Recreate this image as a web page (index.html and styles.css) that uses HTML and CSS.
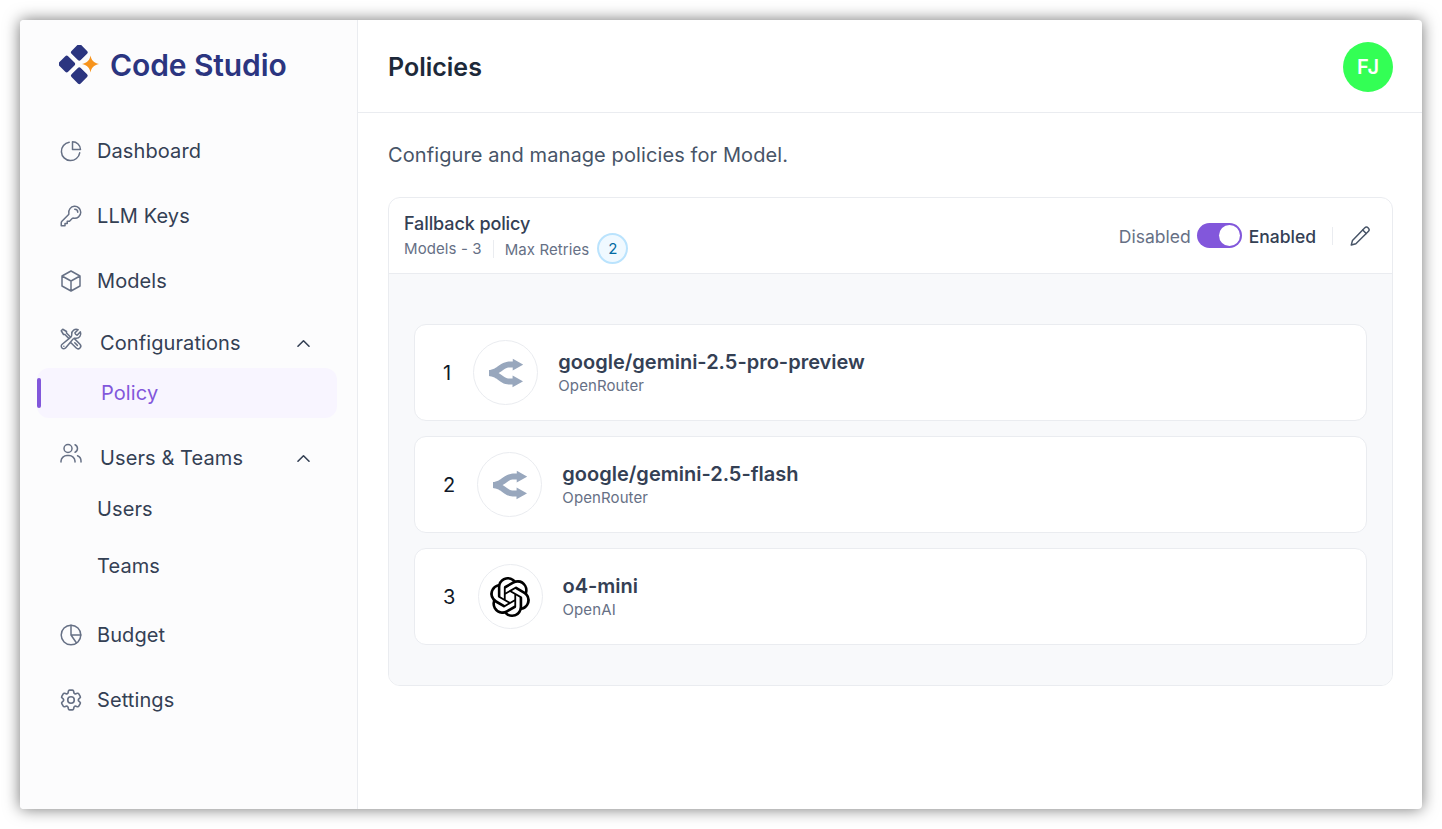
FILE: index.html
```html
<!DOCTYPE html>
<html lang="en">
<head>
<meta charset="utf-8">
<title>Policies</title>
<link rel="stylesheet" href="styles.css">
</head>
<body>
<div class="window">
  <aside class="sidebar">
    <div class="logo">
      <svg class="logo-mark" viewBox="0 0 40 40" width="40" height="40">
        <rect x="13.8" y="0.8" width="13" height="13" rx="2" transform="rotate(45 20.300 7.300)" fill="#2b3580"/>
        <rect x="1.200" y="12.500" width="13" height="13" rx="2" transform="rotate(45 7.700 19)" fill="#2b3580"/>
        <rect x="13.8" y="24.200" width="13" height="13" rx="2" transform="rotate(45 20.300 30.700)" fill="#2b3580"/>
        <path d="M31.500 10.500c1 5 3 7 8.500 8.500-5.500 1.500-7.500 3.500-8.500 8.500-1-5-3-7-8.500-8.500 5.500-1.500 7.500-3.500 8.500-8.500Z" fill="#f7941d"/>
      </svg>
      <span class="logo-text">Code Studio</span>
    </div>
    <nav class="nav">
      <a class="nav-item"><svg class="icon" viewBox="0 0 24 24"><path d="M10.200 3.300A9.200 9.200 0 1 0 20.700 13.800"/><path d="M13.500 2.800v7.700h8A8 8 0 0 0 13.500 2.800Z"/></svg>Dashboard</a>
      <a class="nav-item"><svg class="icon" viewBox="0 0 24 24"><path d="M15.750 5.250a3 3 0 0 1 3 3m3 0a6 6 0 0 1-7.029 5.912c-.563-.097-1.159.026-1.563.43L10.500 17.250H8.250v2.250H6v2.250H2.250v-2.818c0-.597.237-1.170.659-1.591l6.499-6.499c.404-.404.527-1 .43-1.563A6 6 0 1 1 21.750 8.250Z"/></svg>LLM Keys</a>
      <a class="nav-item"><svg class="icon" viewBox="0 0 24 24"><path d="m21 7-9-5L3 7m18 0-9 5m9-5v10l-9 5M3 7l9 5M3 7v10l9 5m0-10v10"/></svg>Models</a>

      <div class="group group-config">
        <div class="group-head">
          <svg class="icon icon-raised" viewBox="0 0 24 24"><path d="M11.420 15.170 17.250 21A2.652 2.652 0 0 0 21 17.250l-5.877-5.877M11.420 15.170l2.496-3.030c.317-.384.74-.626 1.208-.766M11.420 15.170l-4.655 5.653a2.548 2.548 0 1 1-3.586-3.586l6.837-5.630m5.108-.233c.55-.164 1.163-.188 1.743-.14a4.500 4.500 0 0 0 4.486-6.336l-3.276 3.277a3.004 3.004 0 0 1-2.250-2.250l3.276-3.276a4.500 4.500 0 0 0-6.336 4.486c.091 1.076-.071 2.264-.904 2.950l-.102.085m-1.745 1.437L5.909 7.500H4.500L2.250 3.750l1.500-1.500L7.500 4.500v1.409l4.260 4.260m-1.745 1.437 1.745-1.437m6.615 8.206L15.750 15.750M4.867 19.125h.008v.008h-.008v-.008Z"/></svg>
          <span class="group-label">Configurations</span>
          <svg class="chevron" viewBox="0 0 24 24"><path d="m5 15.500 7-7 7 7"/></svg>
        </div>
        <a class="sub-item active">Policy</a>
      </div>

      <div class="group group-users">
        <div class="group-head">
          <svg class="icon icon-raised" viewBox="0 0 24 24"><circle cx="9" cy="6.500" r="4"/><path d="M2 20v-1a6 6 0 0 1 6-5.500h2a6 6 0 0 1 6 5.500v1"/><path d="M16 2.800a4 4 0 0 1 0 7.400"/><path d="M18.500 13.800a5.500 5.500 0 0 1 3.500 5.200v1"/></svg>
          <span class="group-label">Users &amp; Teams</span>
          <svg class="chevron" viewBox="0 0 24 24"><path d="m5 15.500 7-7 7 7"/></svg>
        </div>
        <a class="sub-item plain">Users</a>
        <a class="sub-item plain">Teams</a>
      </div>

      <a class="nav-item nav-after"><svg class="icon" viewBox="0 0 24 24"><circle cx="12" cy="12" r="9.800"/><path d="M12 2.200V12h9.800M12 12l5.500 8"/></svg>Budget</a>
      <a class="nav-item"><svg class="icon" viewBox="1 1 22 22"><path d="M9.594 3.940c.09-.542.56-.94 1.110-.94h2.593c.55 0 1.020.398 1.110.94l.213 1.281c.063.374.313.686.645.87.074.04.147.083.22.127.325.196.72.257 1.075.124l1.217-.456a1.125 1.125 0 0 1 1.370.49l1.296 2.247a1.125 1.125 0 0 1-.26 1.431l-1.003.827c-.293.241-.438.613-.43.992a7.723 7.723 0 0 1 0 .255c-.008.378.137.75.43.991l1.004.827c.424.35.534.955.26 1.430l-1.298 2.247a1.125 1.125 0 0 1-1.369.491l-1.217-.456c-.355-.133-.75-.072-1.076.124a6.470 6.470 0 0 1-.22.128c-.331.183-.581.495-.644.869l-.213 1.281c-.09.543-.56.94-1.110.94h-2.594c-.55 0-1.019-.398-1.110-.94l-.213-1.281c-.062-.374-.312-.686-.644-.87a6.520 6.520 0 0 1-.22-.127c-.325-.196-.72-.257-1.076-.124l-1.217.456a1.125 1.125 0 0 1-1.369-.49l-1.297-2.247a1.125 1.125 0 0 1 .26-1.431l1.004-.827c.292-.24.437-.613.43-.991a6.932 6.932 0 0 1 0-.255c.007-.38-.138-.751-.43-.992l-1.004-.827a1.125 1.125 0 0 1-.26-1.430l1.297-2.247a1.125 1.125 0 0 1 1.370-.491l1.216.456c.356.133.751.072 1.076-.124.072-.044.146-.086.22-.128.332-.183.582-.495.644-.869l.214-1.280Z"/><path d="M15 12a3 3 0 1 1-6 0 3 3 0 0 1 6 0Z"/></svg>Settings</a>
    </nav>
  </aside>

  <main class="main">
    <header class="topbar">
      <h1 class="page-title">Policies</h1>
      <div class="avatar">FJ</div>
    </header>
    <section class="content">
      <p class="intro">Configure and manage policies for Model.</p>
      <div class="card">
        <div class="card-head">
          <div class="card-info">
            <div class="card-title">Fallback policy</div>
            <div class="card-meta">
              <span class="meta-models">Models - 3</span>
              <span class="meta-retries">Max Retries</span>
              <span class="badge">2</span>
            </div>
          </div>
          <div class="card-actions">
            <span class="state-off">Disabled</span>
            <span class="toggle"><span class="knob"></span></span>
            <span class="state-on">Enabled</span>
            <span class="edit">
              <svg viewBox="0 0 24 24" width="22" height="22" class="pencil"><path d="M17 3.200a2.800 2.800 0 0 1 4 4L7.500 20.500 2.500 21.800l1.300-5Z"/><path d="m15 5.500 3.800 3.800"/></svg>
            </span>
          </div>
        </div>
        <div class="card-body">
          <div class="model-row">
            <span class="rank">1</span>
            <span class="model-logo"><svg class="or-logo" viewBox="0 0 24 24"><path d="M16.804 1.957l7.220 4.105v.087L16.730 10.210l.017-2.117-.821-.03c-1.059-.028-1.611.002-2.268.11-1.064.175-2.038.577-3.147 1.352L8.345 11.030c-.284.195-.495.336-.68.455l-.515.322-.397.234.385.23.53.338c.476.314 1.170.796 2.701 1.866 1.110.775 2.083 1.177 3.147 1.352l.3.045c.694.091 1.375.094 2.825.033l.022-2.159 7.220 4.105v.087L16.589 22l.014-1.862-.635.022c-1.386.042-2.137.002-3.138-.162-1.694-.28-3.260-.926-4.881-2.059l-2.158-1.500a21.997 21.997 0 00-.755-.498l-.467-.28a55.927 55.927 0 00-.76-.43C2.908 14.730.563 14.116 0 14.116V9.888l.14.004c.564-.007 2.910-.622 3.809-1.124l1.016-.58.438-.274c.428-.28 1.072-.726 2.686-1.853 1.621-1.133 3.186-1.780 4.881-2.059 1.152-.19 1.974-.213 3.814-.138l.02-1.907z"/></svg></span>
            <div class="model-text"><div class="model-name">google/gemini-2.5-pro-preview</div><div class="model-vendor">OpenRouter</div></div>
          </div>
          <div class="model-row">
            <span class="rank">2</span>
            <span class="model-logo"><svg class="or-logo" viewBox="0 0 24 24"><path d="M16.804 1.957l7.220 4.105v.087L16.730 10.210l.017-2.117-.821-.03c-1.059-.028-1.611.002-2.268.11-1.064.175-2.038.577-3.147 1.352L8.345 11.030c-.284.195-.495.336-.68.455l-.515.322-.397.234.385.23.53.338c.476.314 1.170.796 2.701 1.866 1.110.775 2.083 1.177 3.147 1.352l.3.045c.694.091 1.375.094 2.825.033l.022-2.159 7.220 4.105v.087L16.589 22l.014-1.862-.635.022c-1.386.042-2.137.002-3.138-.162-1.694-.28-3.260-.926-4.881-2.059l-2.158-1.500a21.997 21.997 0 00-.755-.498l-.467-.28a55.927 55.927 0 00-.76-.43C2.908 14.730.563 14.116 0 14.116V9.888l.14.004c.564-.007 2.910-.622 3.809-1.124l1.016-.58.438-.274c.428-.28 1.072-.726 2.686-1.853 1.621-1.133 3.186-1.780 4.881-2.059 1.152-.19 1.974-.213 3.814-.138l.02-1.907z"/></svg></span>
            <div class="model-text"><div class="model-name">google/gemini-2.5-flash</div><div class="model-vendor">OpenRouter</div></div>
          </div>
          <div class="model-row">
            <span class="rank">3</span>
            <span class="model-logo"><svg class="ai-logo" viewBox="0 0 24 24"><path d="M22.2819 9.8211a5.9847 5.9847 0 0 0-.5157-4.9108 6.0462 6.0462 0 0 0-6.5098-2.9A6.0651 6.0651 0 0 0 4.9807 4.1818a5.9847 5.9847 0 0 0-3.9977 2.9 6.0462 6.0462 0 0 0 .7427 7.0966 5.98 5.98 0 0 0 .511 4.9107 6.051 6.051 0 0 0 6.5146 2.9001A5.9847 5.9847 0 0 0 13.2599 24a6.0557 6.0557 0 0 0 5.7718-4.2058 5.9894 5.9894 0 0 0 3.9977-2.9001 6.0557 6.0557 0 0 0-.7475-7.0729zm-9.022 12.6081a4.4755 4.4755 0 0 1-2.8764-1.0408l.1419-.0804 4.7783-2.7582a.7948.7948 0 0 0 .3927-.6813v-6.7369l2.02 1.1686a.071.071 0 0 1 .038.052v5.5826a4.504 4.504 0 0 1-4.4945 4.4944zm-9.6607-4.1254a4.4708 4.4708 0 0 1-.5346-3.0137l.142.0852 4.783 2.7582a.7712.7712 0 0 0 .7806 0l5.8428-3.3685v2.3324a.0804.0804 0 0 1-.0332.0615L9.74 19.9502a4.4992 4.4992 0 0 1-6.1408-1.6464zM2.3408 7.8956a4.485 4.485 0 0 1 2.3655-1.9728V11.6a.7664.7664 0 0 0 .3879.6765l5.8144 3.3543-2.0201 1.1685a.0757.0757 0 0 1-.071 0l-4.8303-2.7865A4.504 4.504 0 0 1 2.3408 7.872zm16.5963 3.8558L13.1038 8.364 15.1192 7.2a.0757.0757 0 0 1 .071 0l4.8303 2.7913a4.4944 4.4944 0 0 1-.6765 8.1042v-5.6772a.79.79 0 0 0-.407-.667zm2.0107-3.0231l-.142-.0852-4.7735-2.7818a.7759.7759 0 0 0-.7854 0L9.409 9.2297V6.8974a.0662.0662 0 0 1 .0284-.0615l4.8303-2.7866a4.4992 4.4992 0 0 1 6.6802 4.66zM8.3065 12.863l-2.02-1.1638a.0804.0804 0 0 1-.038-.0567V6.0742a4.4992 4.4992 0 0 1 7.3757-3.4537l-.142.0805L8.704 5.459a.7948.7948 0 0 0-.3927.6813zm1.0976-2.3654l2.602-1.4998 2.6069 1.4998v2.9994l-2.5974 1.4997-2.6067-1.4997Z"/></svg></span>
            <div class="model-text"><div class="model-name">o4-mini</div><div class="model-vendor">OpenAI</div></div>
          </div>
        </div>
      </div>
    </section>
  </main>
</div>
</body>
</html>
```
FILE: styles.css
```css
* { box-sizing: border-box; }
html, body { margin: 0; padding: 0; background: #fff; }
body {
  width: 1442px;
  height: 829px;
  padding: 20px;
  overflow: hidden;
  font-family: Inter, "Liberation Sans", sans-serif;
  color: #344054;
}
.window {
  display: flex;
  width: 1402px;
  height: 789px;
  background: #fff;
  border-radius: 4px;
  box-shadow: 0 0 16px rgba(0, 0, 0, .55);
  overflow: hidden;
}
.sidebar {
  width: 338px;
  flex: none;
  background: #fcfcfd;
  border-right: 1px solid #eaecf0;
  padding-left: 17px;
}
.logo {
  display: flex;
  align-items: center;
  gap: 11px;
  height: 90px;
  padding-left: 22px;
}
.logo-mark { flex: none; }
.logo-text {
  font-size: 30px;
  font-weight: 600;
  letter-spacing: -.1px;
  color: #2b3580;
}
.nav { display: flex; flex-direction: column; width: 300px; padding-top: 8px; letter-spacing: .1px; }
.nav-item {
  display: flex;
  align-items: center;
  gap: 14px;
  height: 65px;
  padding-left: 22px;
  font-size: 20px;
  color: #344054;
}
.icon {
  width: 24px;
  height: 24px;
  flex: none;
  fill: none;
  stroke: #667085;
  stroke-width: 1.5;
  stroke-linecap: round;
  stroke-linejoin: round;
}
.icon-raised { margin-top: -8px; }
.group-config { margin-top: 5px; }
.group-users { margin-top: 15px; }
.group-head {
  display: flex;
  align-items: center;
  height: 50px;
  padding-left: 22px;
  padding-right: 24px;
}
.group-label { flex: 1; margin-left: 17px; font-size: 20px; color: #344054; }
.chevron {
  width: 19px;
  height: 19px;
  fill: none;
  stroke: #344054;
  stroke-width: 2;
  stroke-linecap: round;
  stroke-linejoin: round;
}
.sub-item {
  display: flex;
  align-items: center;
  height: 50px;
  font-size: 20px;
  color: #344054;
  border-radius: 12px;
}
.sub-item.plain { padding-left: 60px; margin-top: 7px; }
.group-users .group-head + .sub-item.plain { margin-top: 1px; }
.sub-item.active {
  position: relative;
  padding-left: 64px;
  background: #f8f5ff;
  color: #8257db;
}
.sub-item.active::before {
  content: "";
  position: absolute;
  left: 0;
  top: 10px;
  width: 4px;
  height: 30px;
  border-radius: 2px;
  background: #8257db;
}
.nav-after { margin-top: 11px; }
.main { flex: 1; min-width: 0; }
.topbar {
  display: flex;
  align-items: center;
  justify-content: space-between;
  height: 93px;
  padding: 2px 29px 0 30px;
  border-bottom: 1px solid #eaecf0;
}
.page-title { margin: 0; font-size: 25px; font-weight: 600; color: #1d2939; }
.avatar {
  display: flex;
  align-items: center;
  justify-content: center;
  width: 50px;
  height: 50px;
  border-radius: 50%;
  background: #33ff55;
  color: #fff;
  font-size: 20px;
  font-weight: 600;
}
.content { padding: 29px 29px 0 30px; }
.intro { margin: 0 0 29px; font-size: 20px; line-height: 26px; letter-spacing: .1px; color: #475467; }
.card { border: 1px solid #eaecf0; border-radius: 12px; overflow: hidden; background: #fff; }
.card-head {
  display: flex;
  align-items: center;
  justify-content: space-between;
  height: 76px;
  padding: 0 21px 0 15px;
  border-bottom: 1px solid #eaecf0;
}
.card-info { margin-top: 5px; }
.card-title { font-size: 18px; font-weight: 500; line-height: 24px; letter-spacing: -.1px; color: #344054; }
.card-meta { display: flex; align-items: center; font-size: 15px; letter-spacing: .1px; color: #667085; height: 30px; margin-top: -2px; }
.meta-models { padding-right: 11px; border-right: 1px solid #eaecf0; line-height: 18px; }
.meta-retries { margin-left: 11px; }
.badge {
  display: flex;
  align-items: center;
  justify-content: center;
  width: 31px;
  height: 31px;
  margin-left: 8px;
  margin-bottom: 2px;
  border-radius: 50%;
  border: 2px solid #bae3fd;
  background: #f0f9ff;
  color: #026aa2;
  font-size: 15px;
  font-weight: 400;
}
.card-actions { display: flex; align-items: center; }
.state-off { font-size: 17.500px; color: #667085; margin-top: 1px; }
.state-on { font-size: 17.500px; font-weight: 500; color: #344054; margin-left: 7px; margin-top: 1px; }
.toggle {
  display: flex;
  justify-content: flex-end;
  align-items: center;
  width: 45px;
  height: 25px;
  margin-left: 6px;
  padding: 2px;
  border-radius: 13px;
  background: #8257db;
}
.knob { width: 21px; height: 21px; border-radius: 50%; background: #fff; }
.edit {
  display: flex;
  align-items: center;
  height: 18px;
  margin-left: 16px;
  padding-left: 16px;
  border-left: 1px solid #eaecf0;
}
.pencil { fill: none; stroke: #475467; stroke-width: 1.6; stroke-linecap: round; stroke-linejoin: round; }
.card-body {
  display: flex;
  flex-direction: column;
  gap: 15px;
  height: 411px;
  padding: 50px 25px 0;
  background: #f8f9fb;
}
.model-row {
  display: flex;
  align-items: center;
  height: 97px;
  padding-left: 28px;
  background: #fff;
  border: 1px solid #eaecf0;
  border-radius: 12px;
}
.rank { font-size: 20px; letter-spacing: .15px; color: #101828; margin-right: 22px; }
.model-logo {
  display: flex;
  align-items: center;
  justify-content: center;
  flex: none;
  width: 65px;
  height: 65px;
  border: 1px solid #eaecf0;
  border-radius: 50%;
  background: #fff;
}
.or-logo { width: 34px; height: 34px; fill: #98a7bd; }
.ai-logo { width: 40px; height: 40px; fill: #000; }
.model-text { margin-left: 20px; margin-top: -1px; }
.model-name { font-size: 20px; font-weight: 600; line-height: 27px; color: #344054; }
.model-vendor { font-size: 15px; line-height: 20px; letter-spacing: .1px; color: #667085; }
```
